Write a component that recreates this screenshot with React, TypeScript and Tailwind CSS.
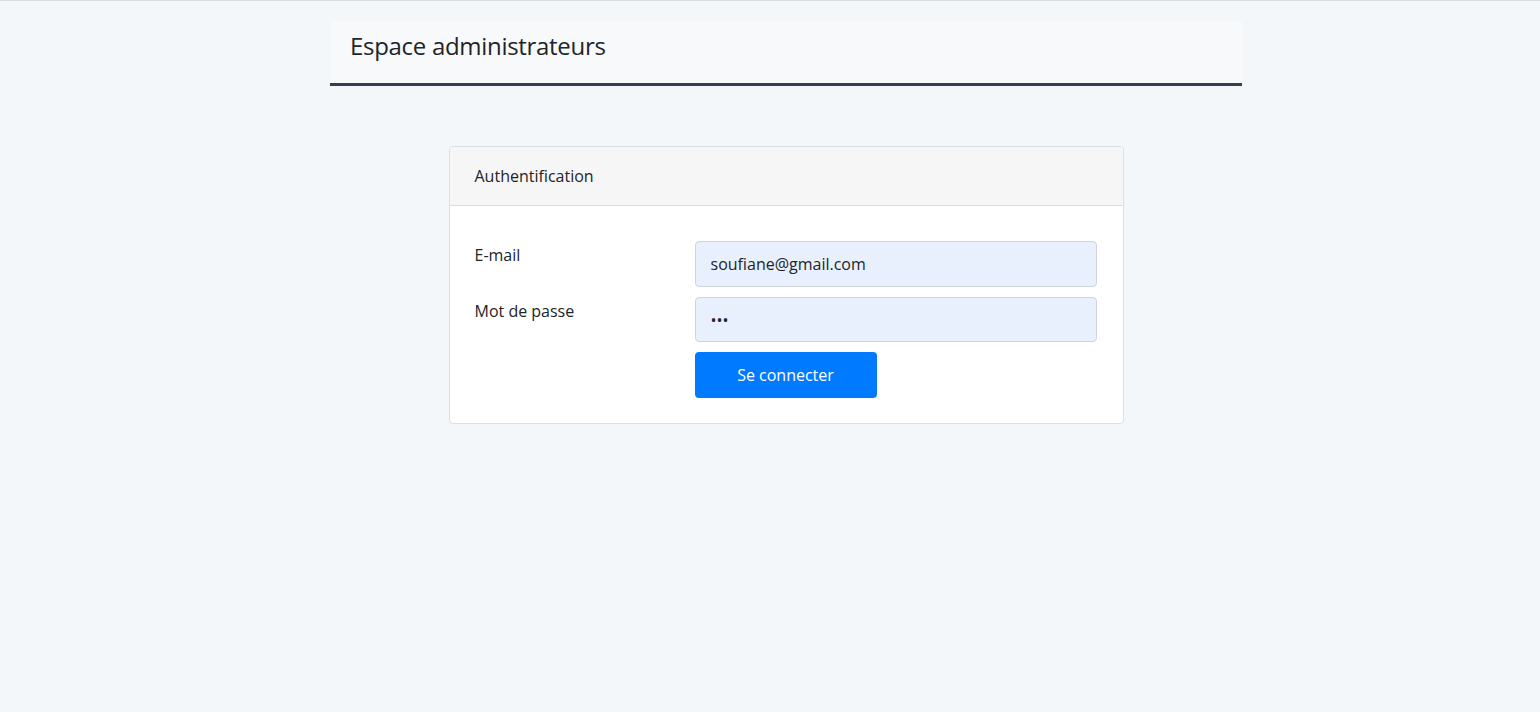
import React from "react";

export default function App() {
  return (
    <div
      className="min-h-[712px] w-full bg-[#f4f7fa] border-t border-[#d9dee3] text-[#212529] pl-[32px]"
      style={{ fontFamily: '"Open Sans", "Liberation Sans", sans-serif' }}
    >
      <div className="w-[912px] mx-auto pt-[20px]">
        <div className="h-[65px] bg-[#f7f9fb] border-b-[3px] border-[#343f4f] flex items-center px-[20px] pb-[12px]">
          <h1 className="text-[24px] tracking-[-0.3px] text-[#212529] leading-none">Espace administrateurs</h1>
        </div>
      </div>
      <div className="w-[675px] mx-auto mt-[60px] bg-white border border-[#dcdfe3] rounded-[4px] overflow-hidden">
        <div className="h-[59px] bg-[#f6f6f6] border-b border-[#dcdcdc] flex items-center px-[25px]">
          <span className="text-[16px]">Authentification</span>
        </div>
        <div className="px-[25px] pt-[35px] pb-[25px] flex flex-col gap-[10px]">
          <div className="flex">
            <label className="w-[220px] text-[16px] pt-[2px]">E-mail</label>
            <input
              className="w-[402px] h-[46px] bg-[#e8f0fe] border border-[#ced4da] rounded-[4px] px-[15px] text-[16px] outline-none"
              defaultValue="soufiane@gmail.com"
            />
          </div>
          <div className="flex">
            <label className="w-[220px] text-[16px] pt-[2px]">Mot de passe</label>
            <input
              type="password"
              className="w-[402px] h-[45px] bg-[#e8f0fe] border border-[#ced4da] rounded-[4px] px-[15px] text-[16px] outline-none"
              defaultValue="123"
            />
          </div>
          <div className="flex">
            <div className="w-[220px]" />
            <button className="w-[182px] h-[46px] bg-[#007bff] text-white rounded-[4px] text-[16px]">Se connecter</button>
          </div>
        </div>
      </div>
    </div>
  );
}
